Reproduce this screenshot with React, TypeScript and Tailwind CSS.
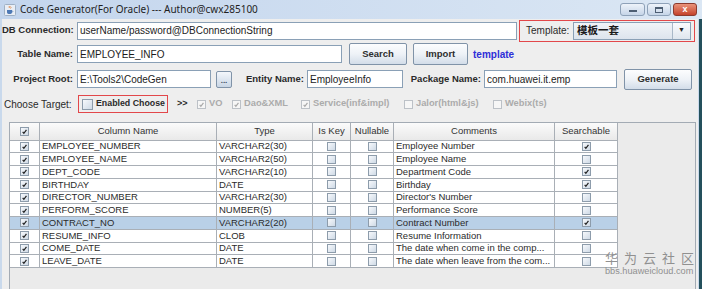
import clsx from "clsx";

const SANS = "font-['Liberation_Sans',Arial,sans-serif]";

type Row = [string, string, string, boolean];

const rows: Row[] = [
  ["EMPLOYEE_NUMBER", "VARCHAR2(30)", "Employee Number", true],
  ["EMPLOYEE_NAME", "VARCHAR2(50)", "Employee Name", false],
  ["DEPT_CODE", "VARCHAR2(10)", "Department Code", true],
  ["BIRTHDAY", "DATE", "Birthday", true],
  ["DIRECTOR_NUMBER", "VARCHAR2(30)", "Director's Number", false],
  ["PERFORM_SCORE", "NUMBER(5)", "Performance Score", false],
  ["CONTRACT_NO", "VARCHAR2(20)", "Contract Number", true],
  ["RESUME_INFO", "CLOB", "Resume Information", false],
  ["COME_DATE", "DATE", "The date when come in the comp...", false],
  ["LEAVE_DATE", "DATE", "The date when leave from the com...", false],
];

const SELECTED = 6;

function Box({
  checked,
  disabled,
  big,
}: {
  checked?: boolean;
  disabled?: boolean;
  big?: boolean;
}) {
  return (
    <span
      className={clsx(
        "inline-flex shrink-0 items-center justify-center border",
        big ? "h-[11px] w-[11px]" : "h-[9px] w-[9px]",
        disabled
          ? "border-[#bcc1c7] bg-[#f6f6f6]"
          : "border-[#8d9cab] bg-gradient-to-br from-[#f7f9fc] to-[#cfdae6]"
      )}
    >
      {checked && (
        <svg viewBox="0 0 10 10" className="h-full w-full" aria-hidden>
          <path
            d="M2.4 5.4 L4.1 7.6 L7.8 2.6"
            fill="none"
            stroke={disabled ? "#a8a8a8" : "#1f1f1f"}
            strokeWidth={1.7}
          />
        </svg>
      )}
    </span>
  );
}

function Field({ value, w }: { value: string; w: string }) {
  return (
    <div
      className={clsx(
        "flex h-[18px] shrink-0 items-center overflow-hidden whitespace-nowrap border border-[#8aa0b6] bg-white pl-[2px] text-[10px] text-[#1c1c1c]",
        w
      )}
    >
      {value}
    </div>
  );
}

function Btn({ label, w, h }: { label: string; w: string; h: string }) {
  return (
    <div
      className={clsx(
        "flex shrink-0 items-center justify-center rounded-[2px] border border-[#8093a8] bg-gradient-to-b from-[#fcfdfe] via-[#eef2f7] to-[#d3dde9] text-[9.5px] font-bold text-[#2e2e2e]",
        w,
        h
      )}
    >
      {label}
    </div>
  );
}

function Label({ text, w }: { text: string; w: string }) {
  return (
    <span
      className={clsx(
        "shrink-0 whitespace-nowrap text-right text-[9.5px] font-bold text-[#2a2a2a]",
        w
      )}
    >
      {text}
    </span>
  );
}

function Target({
  label,
  checked,
  w,
}: {
  label: string;
  checked?: boolean;
  w: string;
}) {
  return (
    <div className={clsx("flex shrink-0 items-center gap-[3px]", w)}>
      <Box checked={checked} disabled />
      <span className="whitespace-nowrap text-[9.3px] font-bold text-[#ababab]">
        {label}
      </span>
    </div>
  );
}

const cell =
  "flex h-[12.75px] items-center overflow-hidden whitespace-nowrap border-r border-b border-[#a9afb6]";
const head =
  "flex h-[17.5px] items-center justify-center overflow-hidden whitespace-nowrap border-r border-b border-[#a9afb6] bg-gradient-to-b from-[#fbfbfb] to-[#e9e9e9] text-[9.5px] text-[#333]";

function JavaIcon() {
  return (
    <svg viewBox="0 0 12 12" className="h-[12px] w-[12px]" aria-hidden>
      <rect x="0.5" y="0.5" width="11" height="11" rx="1" fill="#e9eef5" stroke="#9fb0c4" />
      <path d="M3 6 h5 v2.5 a2 2 0 0 1 -2 1.5 h-1 a2 2 0 0 1 -2 -1.5 z" fill="#4d79b5" />
      <path d="M8 6.5 a1.2 1.2 0 0 1 0 2" fill="none" stroke="#4d79b5" strokeWidth="0.8" />
      <path d="M5 2 q1 1 0 2 M6.5 2.5 q1 1 0 2" fill="none" stroke="#e07a2e" strokeWidth="0.8" />
    </svg>
  );
}

export default function App() {
  return (
    <div
      className={clsx(
        "flex h-[289px] w-[702px] flex-col overflow-hidden bg-[#eeeeee]",
        SANS
      )}
    >
      {/* title bar */}
      <div className="flex h-[19px] shrink-0 items-center bg-gradient-to-r from-[#c3d5ed] to-[#dbe7f4] pl-[4px] pr-[5px]">
        <JavaIcon />
        <span className="ml-[4px] font-['Noto_Sans',sans-serif] text-[10px] text-[#1e1e1e]">
          Code Generator(For Oracle) --- Author@cwx285100
        </span>
        <div className="ml-auto flex items-center gap-[2px]">
          <div className="flex h-[13px] w-[25px] items-end justify-center rounded-[3px] border border-[#8ea1b8] bg-gradient-to-b from-[#eef3fa] to-[#c6d5e8] pb-[3px]">
            <span className="h-[2px] w-[8px] bg-[#4d5e73]" />
          </div>
          <div className="flex h-[13px] w-[24px] items-center justify-center rounded-[3px] border border-[#8ea1b8] bg-gradient-to-b from-[#eef3fa] to-[#c6d5e8]">
            <span className="h-[6px] w-[8px] border border-t-2 border-[#4d5e73]" />
          </div>
          <div className="flex h-[13px] w-[24px] items-center justify-center rounded-[3px] border border-[#8b3b2f] bg-gradient-to-b from-[#e9937b] to-[#c4402a] text-[9px] font-bold leading-none text-white">
            x
          </div>
        </div>
      </div>

      <div className="flex min-h-0 flex-1">
        <div className="w-[2px] shrink-0 bg-[#c9d9ec]" />
        <div className="flex min-w-0 flex-1 flex-col">
          {/* row 1 */}
          <div className="flex h-[23px] shrink-0 items-center">
            <Label text="DB Connection:" w="w-[71px]" />
            <div className="ml-[4px]">
              <Field value="userName/password@DBConnectionString" w="w-[440px]" />
            </div>
            <div className="ml-[2px] flex h-[22px] w-[176px] items-center justify-between border border-[#e2474a] pl-[6px] pr-[3px]">
              <span className="text-[10px] text-[#2a2a2a]">Template:</span>
              <div className="flex h-[18px] w-[118px] items-center border border-[#8aa0b6] bg-gradient-to-b from-[#f1f4f8] to-[#dde4ed]">
                <span className="flex-1 pl-[3px] font-['Noto_Sans_CJK_SC',sans-serif] text-[10.5px] font-bold leading-none text-[#1a1a1a]">
                  模板一套
                </span>
                <div className="flex h-full w-[18px] items-center justify-center border-l border-[#a9b8c8] bg-gradient-to-b from-[#fafbfd] to-[#dfe6ee] text-[7px] text-[#222]">
                  ▼
                </div>
              </div>
            </div>
          </div>

          {/* row 2 */}
          <div className="flex h-[24px] shrink-0 items-center">
            <Label text="Table Name:" w="w-[71px]" />
            <div className="ml-[4px]">
              <Field value="EMPLOYEE_INFO" w="w-[265px]" />
            </div>
            <div className="ml-[7px]">
              <Btn label="Search" w="w-[58px]" h="h-[22px]" />
            </div>
            <div className="ml-[6px]">
              <Btn label="Import" w="w-[55px]" h="h-[22px]" />
            </div>
            <span className="ml-[5px] text-[10px] font-bold text-[#2d2dd8]">
              template
            </span>
          </div>

          {/* row 3 */}
          <div className="mt-[1px] flex h-[24px] shrink-0 items-center">
            <Label text="Project Root:" w="w-[71px]" />
            <div className="ml-[4px]">
              <Field value="E:\Tools2\CodeGen" w="w-[134px]" />
            </div>
            <div className="ml-[5px] flex h-[17px] w-[16px] items-end justify-center rounded-[2px] border border-[#8093a8] bg-gradient-to-b from-[#f4f7fb] to-[#c9d6e5] pb-[2px] text-[8px] font-bold leading-none text-[#3b4a5c]">
              ...
            </div>
            <Label text="Entity Name:" w="ml-[4px] w-[68px]" />
            <div className="ml-[3px]">
              <Field value="EmployeeInfo" w="w-[96px]" />
            </div>
            <Label text="Package Name:" w="ml-[6px] w-[72px]" />
            <div className="ml-[3px]">
              <Field value="com.huawei.it.emp" w="w-[133px]" />
            </div>
            <div className="ml-[7px]">
              <Btn label="Generate" w="w-[68px]" h="h-[21px]" />
            </div>
          </div>

          {/* row 4 */}
          <div className="mt-[2px] flex h-[22px] shrink-0 items-center pl-[2px]">
            <span className="w-[74px] shrink-0 whitespace-nowrap text-[10px] text-[#2a2a2a]">
              Choose Target:
            </span>
            <div className="flex h-[18px] w-[90px] shrink-0 items-center gap-[3px] border border-[#e2474a] pl-[3px]">
              <Box big />
              <span className="whitespace-nowrap text-[8.8px] font-bold text-[#2a2a2a]">
                Enabled Choose
              </span>
            </div>
            <span className="ml-[9px] w-[20px] shrink-0 text-[9px] font-bold text-[#2a2a2a]">
              &gt;&gt;
            </span>
            <Target label="VO" checked w="w-[35px]" />
            <Target label="Dao&XML" checked w="w-[69px]" />
            <Target label="Service(inf&impl)" checked w="w-[103px]" />
            <Target label="Jalor(html&js)" w="w-[89px]" />
            <Target label="Webix(ts)" w="w-[70px]" />
          </div>

          {/* table */}
          <div className="relative ml-[7px] mt-[7px] flex h-[200px] w-[687px] shrink-0 border-l border-t border-r border-[#a3abb4] bg-[#ebebeb]">
            <div className="w-[608px] shrink-0">
              <div className="grid grid-cols-[30px_177px_96px_38px_43px_161px_63px]">
                <div className={head}>
                  <Box checked />
                </div>
                <div className={head}>Column Name</div>
                <div className={head}>Type</div>
                <div className={head}>Is Key</div>
                <div className={head}>Nullable</div>
                <div className={head}>Comments</div>
                <div className={head}>Searchable</div>
              </div>
              <div className="grid grid-cols-[30px_177px_96px_38px_43px_161px_63px] text-[9.5px] text-[#2b2b2b]">
                {rows.map(([name, type, comment, search], i) => {
                  const bg = i === SELECTED ? "bg-[#b9d0e7]" : "bg-white";
                  return [
                    <div key={`c${i}`} className={clsx(cell, bg, "justify-center")}>
                      <Box checked />
                    </div>,
                    <div key={`n${i}`} className={clsx(cell, bg, "pl-[2px]")}>
                      {name}
                    </div>,
                    <div key={`t${i}`} className={clsx(cell, bg, "pl-[2px]")}>
                      {type}
                    </div>,
                    <div key={`k${i}`} className={clsx(cell, bg, "justify-center")}>
                      <Box />
                    </div>,
                    <div key={`u${i}`} className={clsx(cell, bg, "justify-center")}>
                      <Box />
                    </div>,
                    <div key={`m${i}`} className={clsx(cell, bg, "pl-[2px]")}>
                      {comment}
                    </div>,
                    <div key={`s${i}`} className={clsx(cell, bg, "justify-center")}>
                      <Box checked={search} />
                    </div>,
                  ];
                })}
              </div>
            </div>

            {/* watermark */}
            <div className="pointer-events-none absolute left-[595px] top-[126px] flex w-[89px] flex-col">
              <div className="flex h-[17px] items-center justify-between font-['Noto_Sans_CJK_SC',sans-serif] text-[13px] leading-[17px] text-[#909090]">
                <span>华</span>
                <span>为</span>
                <span>云</span>
                <span>社</span>
                <span>区</span>
              </div>
              <span className="whitespace-nowrap text-[9.2px] leading-[11px] text-[#909090]">
                bbs.huaweicloud.com
              </span>
            </div>
          </div>
        </div>
        <div className="flex w-[4px] shrink-0">
          <div className="w-[1px] bg-[#c9d9ec]" />
          <div className="flex-1 bg-[#24505c]" />
        </div>
      </div>
    </div>
  );
}
